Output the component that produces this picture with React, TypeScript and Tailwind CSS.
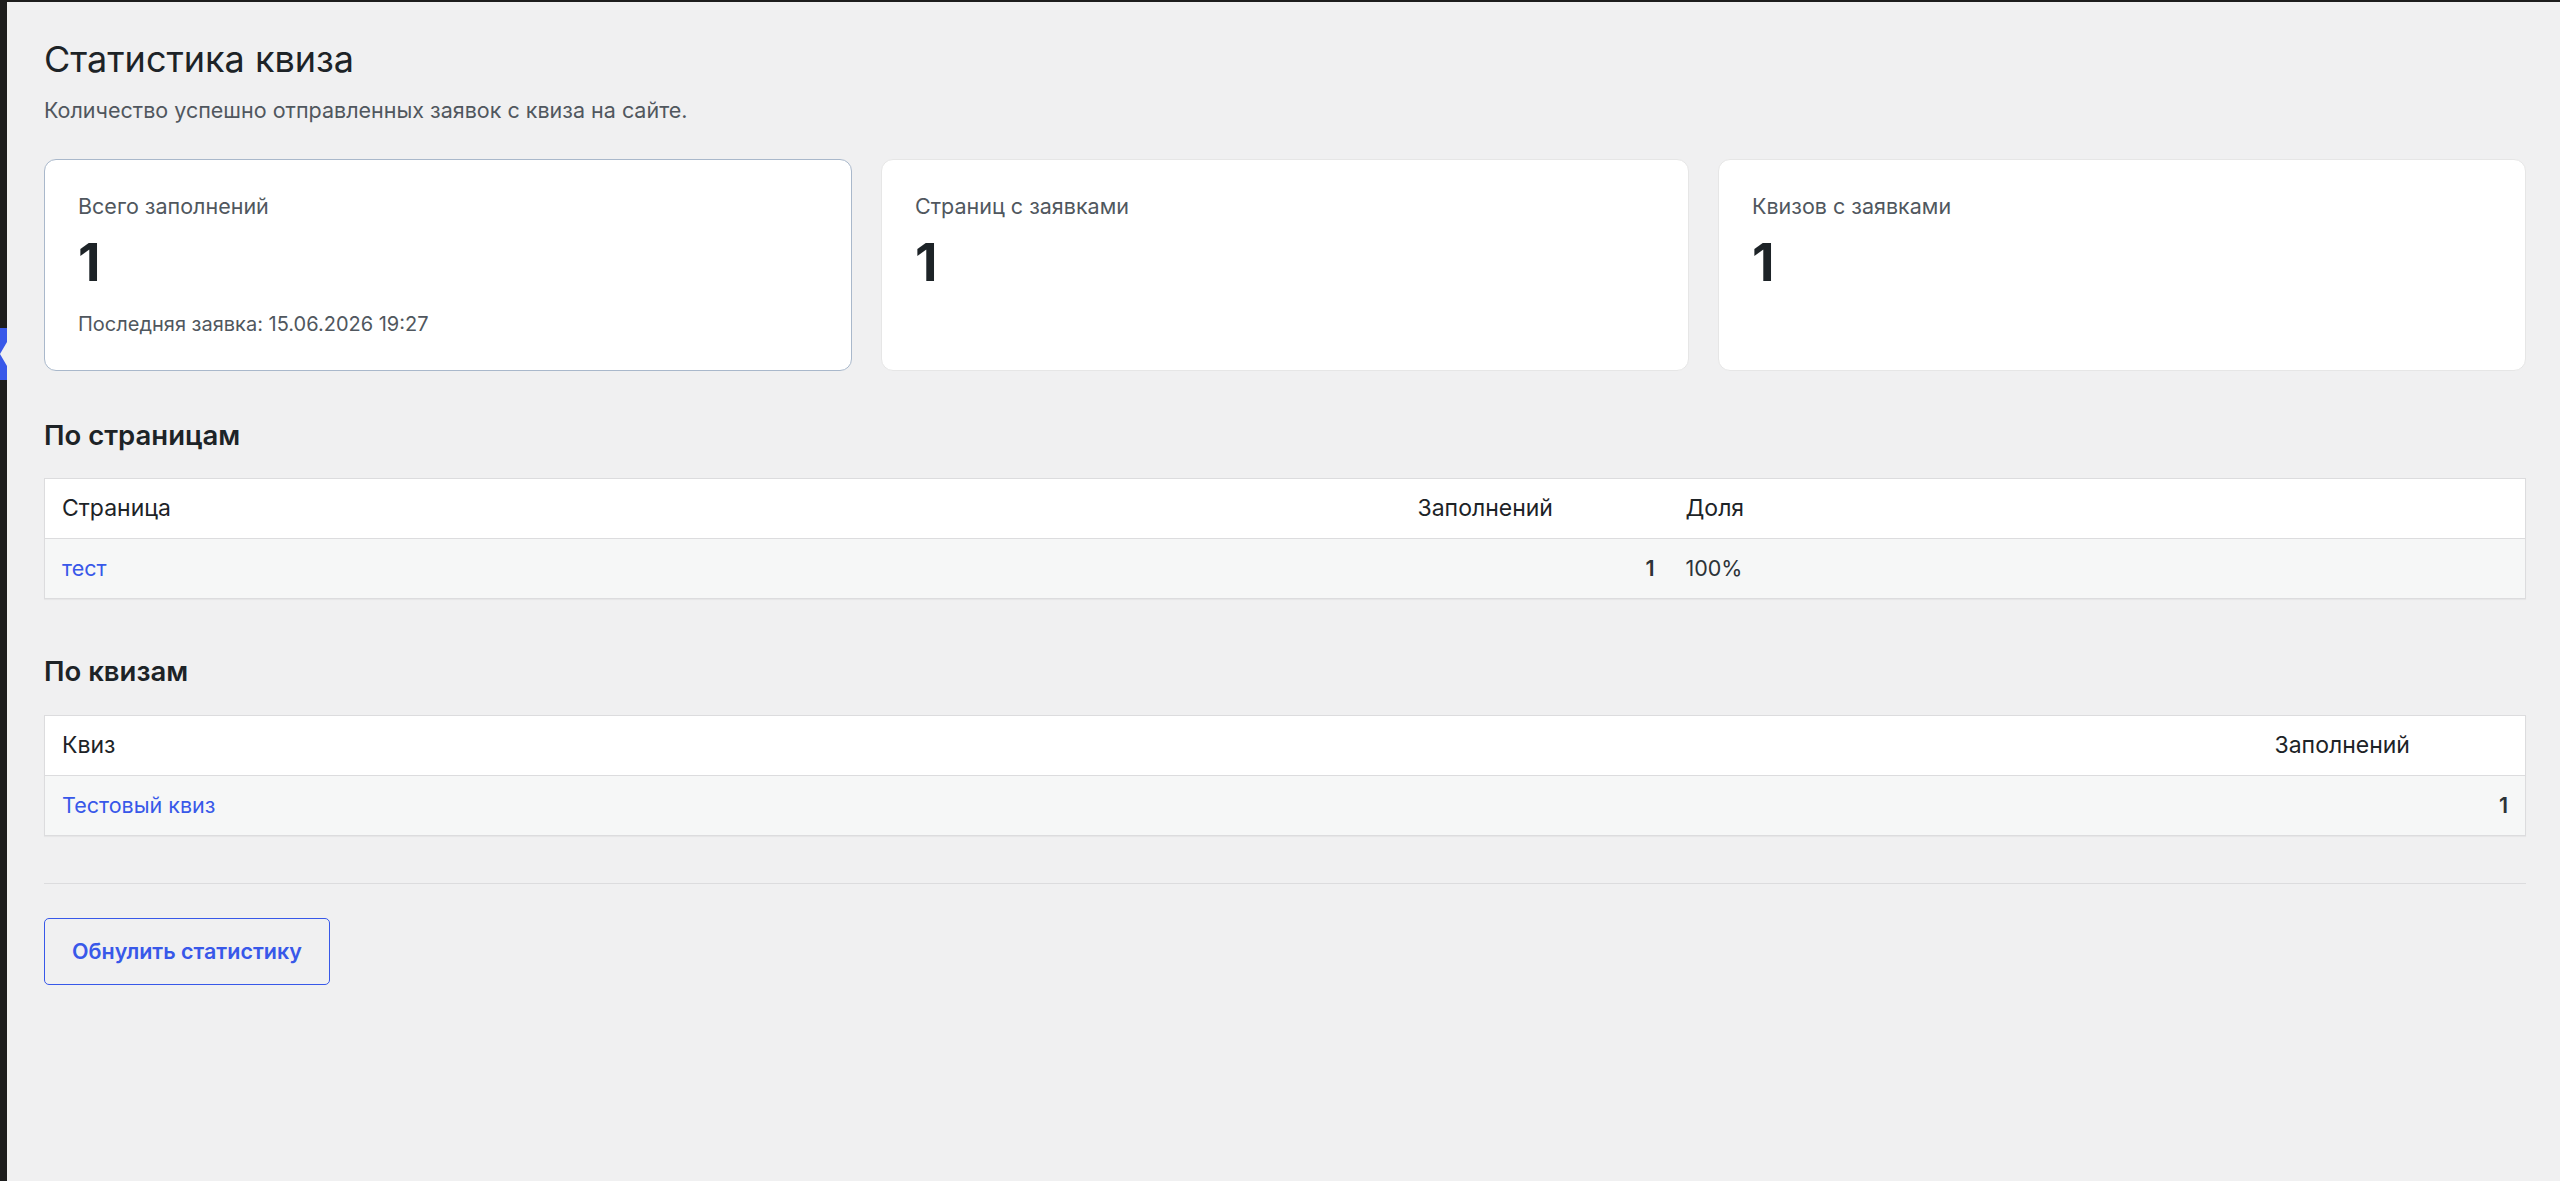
import type { ReactNode } from 'react'

const font = { fontFamily: 'Inter, "Noto Sans", Arial, sans-serif' }

interface StatCardProps {
  label: string
  value: number
  note?: string
  active?: boolean
}

function StatCard({ label, value, note, active }: StatCardProps) {
  return (
    <div
      className={
        active
          ? 'rounded-[12px] border border-[#a9b8cb] bg-white px-[33px] pt-[31px] pb-[32px]'
          : 'rounded-[12px] border border-[#e6e6e6] bg-white px-[33px] pt-[31px] pb-[32px]'
      }
    >
      <div className="text-[21.5px] leading-[30px] text-[#50575e]">{label}</div>
      <div className="mt-[16px] text-[52px] leading-[52px] font-bold text-[#1d2327]">{value}</div>
      {note && <div className="mt-[21px] text-[20px] leading-[28px] text-[#50575e]">{note}</div>}
    </div>
  )
}

function SectionTitle({ children }: { children: ReactNode }) {
  return <h2 className="text-[27.5px] leading-[36px] font-semibold text-[#1d2327]">{children}</h2>
}

function Th({ children }: { children?: ReactNode }) {
  return (
    <th className="h-[60px] px-[17px] text-left align-middle text-[23px] font-normal text-[#1d2327]">{children}</th>
  )
}

export default function App() {
  return (
    <div className="flex min-h-screen bg-[#1d1d1d] pt-[2px]" style={font}>
      <div className="relative w-[7px] shrink-0">
        <div className="absolute left-0 top-[326px] h-[52px] w-[7px] bg-[#3858e9]" />
        <div className="absolute left-0 top-[340px] h-0 w-0 border-y-[12px] border-r-[7px] border-y-transparent border-r-[#f0f0f1]" />
      </div>
      <div className="flex-1 bg-[#f0f0f1] pl-[37px] pr-[34px] pt-[33px]">
        <h1 className="text-[36px] leading-[48px] font-normal text-[#1d2327]">Статистика квиза</h1>
        <p className="mt-[12px] text-[21.5px] leading-[30px] text-[#50575e]">
          Количество успешно отправленных заявок с квиза на сайте.
        </p>

        <div className="mt-[34px] grid grid-cols-3 gap-[29px]">
          <StatCard label="Всего заполнений" value={1} note="Последняя заявка: 15.06.2026 19:27" active />
          <StatCard label="Страниц с заявками" value={1} />
          <StatCard label="Квизов с заявками" value={1} />
        </div>

        <div className="mt-[46px]">
          <SectionTitle>По страницам</SectionTitle>
        </div>
        <table className="mt-[25px] w-full table-fixed border-collapse border border-[#dcdcde] shadow-[0_1px_1px_rgba(0,0,0,0.04)]">
          <colgroup>
            <col />
            <col className="w-[268px]" />
            <col className="w-[857px]" />
          </colgroup>
          <thead className="bg-white">
            <tr className="border-b border-[#dcdcde]">
              <Th>Страница</Th>
              <Th>Заполнений</Th>
              <Th>Доля</Th>
            </tr>
          </thead>
          <tbody className="bg-[#f6f7f7]">
            <tr className="h-[60px]">
              <td className="px-[17px] text-[21.5px] text-[#3858e9]">тест</td>
              <td className="px-[14px] text-right text-[21.5px] font-semibold text-[#2c3338]">1</td>
              <td className="px-[17px] text-[21.5px] text-[#2c3338]">100%</td>
            </tr>
          </tbody>
        </table>

        <div className="mt-[54px]">
          <SectionTitle>По квизам</SectionTitle>
        </div>
        <table className="mt-[26px] w-full table-fixed border-collapse border border-[#dcdcde] shadow-[0_1px_1px_rgba(0,0,0,0.04)]">
          <colgroup>
            <col />
            <col className="w-[268px]" />
          </colgroup>
          <thead className="bg-white">
            <tr className="border-b border-[#dcdcde]">
              <Th>Квиз</Th>
              <Th>Заполнений</Th>
            </tr>
          </thead>
          <tbody className="bg-[#f6f7f7]">
            <tr className="h-[60px]">
              <td className="px-[17px] text-[21.5px] text-[#3858e9]">Тестовый квиз</td>
              <td className="px-[17px] text-right text-[21.5px] font-semibold text-[#2c3338]">1</td>
            </tr>
          </tbody>
        </table>

        <hr className="mt-[47px] border-0 border-t border-[#dcdcde]" />

        <button
          type="button"
          className="mt-[34px] h-[67px] rounded-[5px] border border-[#3858e9] bg-transparent px-[27px] text-[21.5px] font-semibold text-[#3858e9]"
        >
          Обнулить статистику
        </button>
      </div>
    </div>
  )
}
